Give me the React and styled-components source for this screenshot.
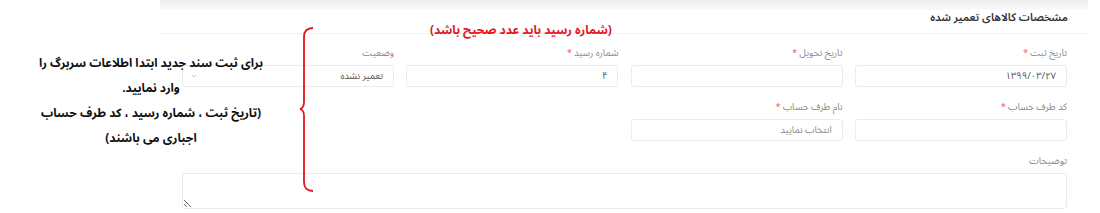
import React from "react";
import styled, { createGlobalStyle } from "styled-components";
import { ChevronDown } from "lucide-react";

const GlobalStyle = createGlobalStyle`
  html, body {
    margin: 0;
    padding: 0;
    background: #fff;
  }
  body {
    font-family: "Noto Sans Arabic", "Noto Naskh Arabic", "DejaVu Sans", sans-serif;
  }
`;

const Page = styled.div`
  position: relative;
  width: 1100px;
  height: 213px;
  overflow: hidden;
  background: #fff;
`;

const Card = styled.section`
  margin-left: 160px;
  width: 928px;
  direction: rtl;
`;

const TopShade = styled.div`
  height: 10px;
  background: linear-gradient(#ededed, #fafafa);
`;

const Header = styled.div`
  height: 24px;
  box-sizing: border-box;
  display: flex;
  align-items: flex-start;
  padding: 1px 20px 0;
  border-bottom: 1px solid #f0f0f0;
`;

const Title = styled.h3`
  margin: 0;
  font-size: 11px;
  line-height: 14px;
  font-weight: 600;
  color: #333;
`;

const Form = styled.div`
  display: grid;
  grid-template-columns: repeat(4, 212px);
  column-gap: 12.33px;
  row-gap: 13px;
  padding: 12px 21px 0;
`;

const Field = styled.div`
  display: flex;
  flex-direction: column;
  grid-column: ${(p) => (p.$wide ? "1 / -1" : "auto")};
`;

const Label = styled.label`
  height: 14px;
  line-height: 14px;
  margin-bottom: 5px;
  font-size: 9.5px;
  color: #8a8a8a;
`;

const Star = styled.span`
  color: #f25a5a;
  margin-right: 2px;
`;

const Input = styled.div`
  box-sizing: border-box;
  height: 22px;
  display: flex;
  align-items: center;
  justify-content: space-between;
  padding: 0 10px 0 7px;
  border: 1px solid #ececec;
  border-radius: 3px;
  font-size: 9.5px;
  color: ${(p) => (p.$placeholder ? "#8c8c8c" : "#555")};
`;

const TextArea = styled.textarea`
  box-sizing: border-box;
  height: 36px;
  width: 100%;
  border: 1px solid #ececec;
  border-radius: 3px;
  background: #fff;
  font-family: inherit;
  font-size: 10px;
  outline: none;
`;

const Note = styled.div`
  position: absolute;
  left: 0;
  top: 51px;
  width: 302px;
  direction: rtl;
  text-align: center;
  white-space: nowrap;
  font-size: 12px;
  font-weight: 700;
  line-height: 25px;
  color: #111;
`;

const RedNote = styled.div`
  position: absolute;
  left: 430px;
  top: 22px;
  direction: rtl;
  white-space: nowrap;
  font-size: 12px;
  line-height: 18px;
  font-weight: 700;
  color: #e3161d;
`;

const Brace = styled.svg`
  position: absolute;
  left: 297px;
  top: 26px;
`;

const App = () => {
  return (
    <Page>
      <GlobalStyle />
      <Card>
        <TopShade />
        <Header>
          <Title>مشخصات کالاهای تعمیر شده</Title>
        </Header>
        <Form>
          <Field>
            <Label>
              تاریخ ثبت<Star>*</Star>
            </Label>
            <Input>۱۳۹۹/۰۳/۲۷</Input>
          </Field>
          <Field>
            <Label>
              تاریخ تحویل<Star>*</Star>
            </Label>
            <Input />
          </Field>
          <Field>
            <Label>
              شماره رسید<Star>*</Star>
            </Label>
            <Input>۴</Input>
          </Field>
          <Field>
            <Label>وضعیت</Label>
            <Input>
              <span>تعمیر نشده</span>
              <ChevronDown size={8} color="#aaa" strokeWidth={2} />
            </Input>
          </Field>
          <Field>
            <Label>
              کد طرف حساب<Star>*</Star>
            </Label>
            <Input />
          </Field>
          <Field>
            <Label>
              نام طرف حساب<Star>*</Star>
            </Label>
            <Input $placeholder>انتخاب نمایید</Input>
          </Field>
          <Field />
          <Field />
          <Field $wide>
            <Label>توضیحات</Label>
            <TextArea readOnly />
          </Field>
        </Form>
      </Card>

      <RedNote>(شماره رسید باید عدد صحیح باشد)</RedNote>

      <Brace width="18" height="168" viewBox="0 0 18 168">
        <path
          d="M16 2 Q7 2 7 11 L7 76 Q7 82 3 83 Q7 84 7 90 L7 156 Q7 165 16 165"
          fill="none"
          stroke="#e3161d"
          strokeWidth="1.8"
        />
      </Brace>

      <Note>
        برای ثبت سند جدید ابتدا اطلاعات سربرگ را
        <br />
        وارد نمایید.
        <br />
        (تاریخ ثبت ، شماره رسید ، کد طرف حساب
        <br />
        اجباری می باشند)
      </Note>
    </Page>
  );
};

export default App;
